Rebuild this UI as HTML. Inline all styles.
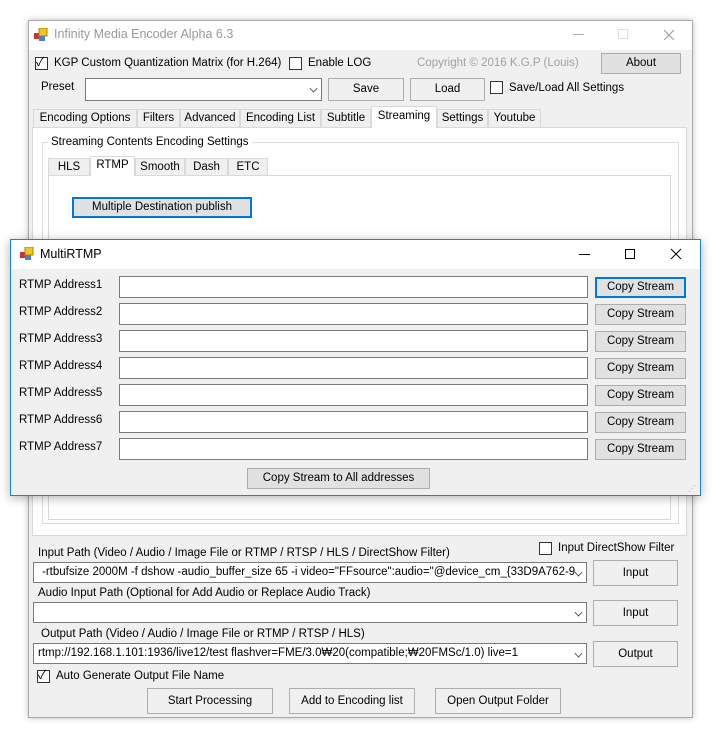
<!DOCTYPE html>
<html><head><meta charset="utf-8"><style>
*{box-sizing:border-box;margin:0;padding:0}
body{width:716px;height:734px;background:#fff;position:relative;overflow:hidden;font-family:"Liberation Sans","Noto Sans CJK KR",sans-serif;font-size:11.5px;color:#000}
.a{position:absolute}
.t{position:absolute;white-space:nowrap;line-height:14px}
.btn{position:absolute;background:#e1e1e1;border:1px solid #adadad;text-align:center;white-space:nowrap}
.btn2{position:absolute;background:#f0f0f0;border:1px solid #adadad;text-align:center;white-space:nowrap}
.cb{position:absolute;width:13px;height:13px;border:1px solid #333;background:#fff}
.box{position:absolute;background:#fff;border:1px solid #7a7a7a}
.combo{position:absolute;background:#fff;border:1px solid #7a7a7a;white-space:nowrap;overflow:hidden;line-height:18px;padding-left:3px}
.tab{position:absolute;background:#f0f0f0;border:1px solid #d9d9d9;border-bottom:none;text-align:center;line-height:17px;white-space:nowrap}
.chev{position:absolute;right:4px;top:6px;width:7px;height:7px;border-right:1px solid #444;border-bottom:1px solid #444;transform:rotate(45deg) scale(.8)}
</style></head><body>
<!-- main window -->
<div class="a" style="left:28px;top:20px;width:665px;height:698px;background:#f0f0f0;border:1px solid #aaa;box-shadow:0 0 6px rgba(0,0,0,.25)"></div>
<div class="a" style="left:29px;top:21px;width:663px;height:29px;background:#fff"></div>
<svg class="a" style="left:34px;top:28px" width="14" height="14"><rect x="0" y="5" width="5" height="6" fill="#c33"/><rect x="5" y="0" width="8" height="8" fill="#f5c518" stroke="#b08000"/><rect x="5" y="8" width="6" height="5" fill="#4a7fd4"/></svg>
<div class="t" style="left:54px;top:27px;font-size:12.5px;color:#999">Infinity Media Encoder Alpha 6.3</div>
<div class="a" style="left:573px;top:34px;width:11px;height:1px;background:#aaa"></div>
<div class="a" style="left:618px;top:29px;width:10px;height:10px;border:1px solid #ddd"></div>
<svg class="a" style="left:663px;top:29px" width="12" height="12"><path d="M1 1L11 11M11 1L1 11" stroke="#999" stroke-width="1"/></svg>

<div class="cb" style="left:35px;top:57px"></div><div class="t" style="left:36px;top:55px;font-size:12px">✓</div>
<div class="t" style="left:54px;top:56px">KGP Custom Quantization Matrix (for H.264)</div>
<div class="cb" style="left:289px;top:57px"></div>
<div class="t" style="left:308px;top:56px">Enable LOG</div>
<div class="t" style="left:417px;top:56px;color:#a0a0a0">Copyright © 2016 K.G.P (Louis)</div>
<div class="btn" style="left:601px;top:53px;width:80px;height:21px;line-height:19px">About</div>
<div class="t" style="left:41px;top:80px">Preset</div>
<div class="combo" style="left:85px;top:78px;width:237px;height:23px"><span class="chev"></span></div>
<div class="btn2" style="left:328px;top:78px;width:76px;height:23px;line-height:21px">Save</div>
<div class="btn2" style="left:410px;top:78px;width:75px;height:23px;line-height:21px">Load</div>
<div class="cb" style="left:490px;top:81px"></div>
<div class="t" style="left:509px;top:81px">Save/Load All Settings</div>

<!-- tabs -->
<div class="a" style="left:32px;top:127px;width:655px;height:409px;background:#fff;border:1px solid #d9d9d9"></div>
<div class="tab" style="left:33px;top:109px;width:104px;height:18px">Encoding Options</div>
<div class="tab" style="left:137px;top:109px;width:43px;height:18px">Filters</div>
<div class="tab" style="left:180px;top:109px;width:60px;height:18px">Advanced</div>
<div class="tab" style="left:240px;top:109px;width:81px;height:18px">Encoding List</div>
<div class="tab" style="left:321px;top:109px;width:50px;height:18px">Subtitle</div>
<div class="tab" style="left:371px;top:106px;width:66px;height:22px;background:#fff;line-height:18px">Streaming</div>
<div class="tab" style="left:437px;top:109px;width:51px;height:18px">Settings</div>
<div class="tab" style="left:488px;top:109px;width:53px;height:18px">Youtube</div>
<div class="a" style="left:42px;top:142px;width:637px;height:382px;border:1px solid #dcdcdc"></div>
<div class="t" style="left:48px;top:135px;background:#fff;padding:0 3px">Streaming Contents Encoding Settings</div>
<div class="a" style="left:48px;top:175px;width:623px;height:345px;border:1px solid #d9d9d9"></div>
<div class="tab" style="left:48px;top:158px;width:42px;height:17px;line-height:16px">HLS</div>
<div class="tab" style="left:90px;top:156px;width:45px;height:20px;background:#fff;line-height:16px">RTMP</div>
<div class="tab" style="left:135px;top:158px;width:50px;height:17px;line-height:16px">Smooth</div>
<div class="tab" style="left:185px;top:158px;width:43px;height:17px;line-height:16px">Dash</div>
<div class="tab" style="left:228px;top:158px;width:40px;height:17px;line-height:16px">ETC</div>
<div class="btn" style="left:72px;top:197px;width:180px;height:21px;border:2px solid #0078d7;line-height:17px">Multiple Destination publish</div>

<!-- bottom -->
<div class="cb" style="left:539px;top:542px"></div>
<div class="t" style="left:558px;top:541px">Input DirectShow Filter</div>
<div class="t" style="left:38px;top:546px">Input Path (Video / Audio / Image File or RTMP / RTSP / HLS / DirectShow Filter)</div>
<div class="combo" style="left:33px;top:562px;width:554px;height:21px;padding-left:8px;padding-right:20px">-rtbufsize 2000M -f dshow -audio_buffer_size 65 -i video="FFsource":audio="@device_cm_{33D9A762-9<span class="chev"></span></div>
<div class="btn2" style="left:593px;top:560px;width:85px;height:26px;line-height:24px">Input</div>
<div class="t" style="left:38px;top:586px">Audio Input Path (Optional for Add Audio or Replace Audio Track)</div>
<div class="combo" style="left:33px;top:602px;width:554px;height:21px"><span class="chev"></span></div>
<div class="btn2" style="left:593px;top:600px;width:85px;height:26px;line-height:24px">Input</div>
<div class="t" style="left:41px;top:627px">Output Path (Video / Audio / Image File or RTMP / RTSP / HLS)</div>
<div class="combo" style="left:33px;top:643px;width:554px;height:21px;padding-left:4px;padding-right:20px">rtmp://192.168.1.101:1936/live12/test flashver=FME/3.0₩20(compatible;₩20FMSc/1.0) live=1<span class="chev"></span></div>
<div class="btn2" style="left:593px;top:641px;width:85px;height:26px;line-height:24px">Output</div>
<div class="cb" style="left:37px;top:670px"></div><div class="t" style="left:38px;top:668px;font-size:12px">✓</div>
<div class="t" style="left:56px;top:669px">Auto Generate Output File Name</div>
<div class="btn2" style="left:147px;top:688px;width:126px;height:26px;line-height:24px">Start Processing</div>
<div class="btn2" style="left:289px;top:688px;width:126px;height:26px;line-height:24px">Add to Encoding list</div>
<div class="btn2" style="left:435px;top:688px;width:126px;height:26px;line-height:24px">Open Output Folder</div>

<!-- dialog -->
<div class="a" style="left:10px;top:239px;width:691px;height:257px;background:#f0f0f0;border:1px solid #1883d7;box-shadow:0 2px 10px rgba(0,0,0,.3)"></div>
<div class="a" style="left:11px;top:240px;width:689px;height:29px;background:#fff"></div>
<svg class="a" style="left:20px;top:247px" width="14" height="14"><rect x="0" y="5" width="5" height="6" fill="#c33"/><rect x="5" y="0" width="8" height="8" fill="#f5c518" stroke="#b08000"/><rect x="5" y="8" width="6" height="5" fill="#4a7fd4"/></svg>
<div class="t" style="left:40px;top:247px;font-size:12.5px">MultiRTMP</div>
<div class="a" style="left:579px;top:254px;width:11px;height:1px;background:#000"></div>
<div class="a" style="left:625px;top:249px;width:10px;height:10px;border:1px solid #000"></div>
<svg class="a" style="left:670px;top:248px" width="12" height="12"><path d="M1 1L11 11M11 1L1 11" stroke="#000" stroke-width="1"/></svg>

<div class="t" style="left:19px;top:278px">RTMP Address1</div><div class="box" style="left:119px;top:276px;width:469px;height:22px"></div><div class="btn" style="left:595px;top:277px;width:91px;height:21px;border:2px solid #0078d7;line-height:17px">Copy Stream</div>
<div class="t" style="left:19px;top:305px">RTMP Address2</div><div class="box" style="left:119px;top:303px;width:469px;height:22px"></div><div class="btn" style="left:595px;top:304px;width:91px;height:21px;line-height:19px">Copy Stream</div>
<div class="t" style="left:19px;top:332px">RTMP Address3</div><div class="box" style="left:119px;top:330px;width:469px;height:22px"></div><div class="btn" style="left:595px;top:331px;width:91px;height:21px;line-height:19px">Copy Stream</div>
<div class="t" style="left:19px;top:359px">RTMP Address4</div><div class="box" style="left:119px;top:357px;width:469px;height:22px"></div><div class="btn" style="left:595px;top:358px;width:91px;height:21px;line-height:19px">Copy Stream</div>
<div class="t" style="left:19px;top:386px">RTMP Address5</div><div class="box" style="left:119px;top:384px;width:469px;height:22px"></div><div class="btn" style="left:595px;top:385px;width:91px;height:21px;line-height:19px">Copy Stream</div>
<div class="t" style="left:19px;top:413px">RTMP Address6</div><div class="box" style="left:119px;top:411px;width:469px;height:22px"></div><div class="btn" style="left:595px;top:412px;width:91px;height:21px;line-height:19px">Copy Stream</div>
<div class="t" style="left:19px;top:440px">RTMP Address7</div><div class="box" style="left:119px;top:438px;width:469px;height:22px"></div><div class="btn" style="left:595px;top:439px;width:91px;height:21px;line-height:19px">Copy Stream</div>
<div class="btn" style="left:247px;top:468px;width:183px;height:21px;line-height:19px">Copy Stream to All addresses</div>
<div class="t" style="left:688px;top:482px;font-size:8px;color:#aaa">⋰</div>
</body></html>
